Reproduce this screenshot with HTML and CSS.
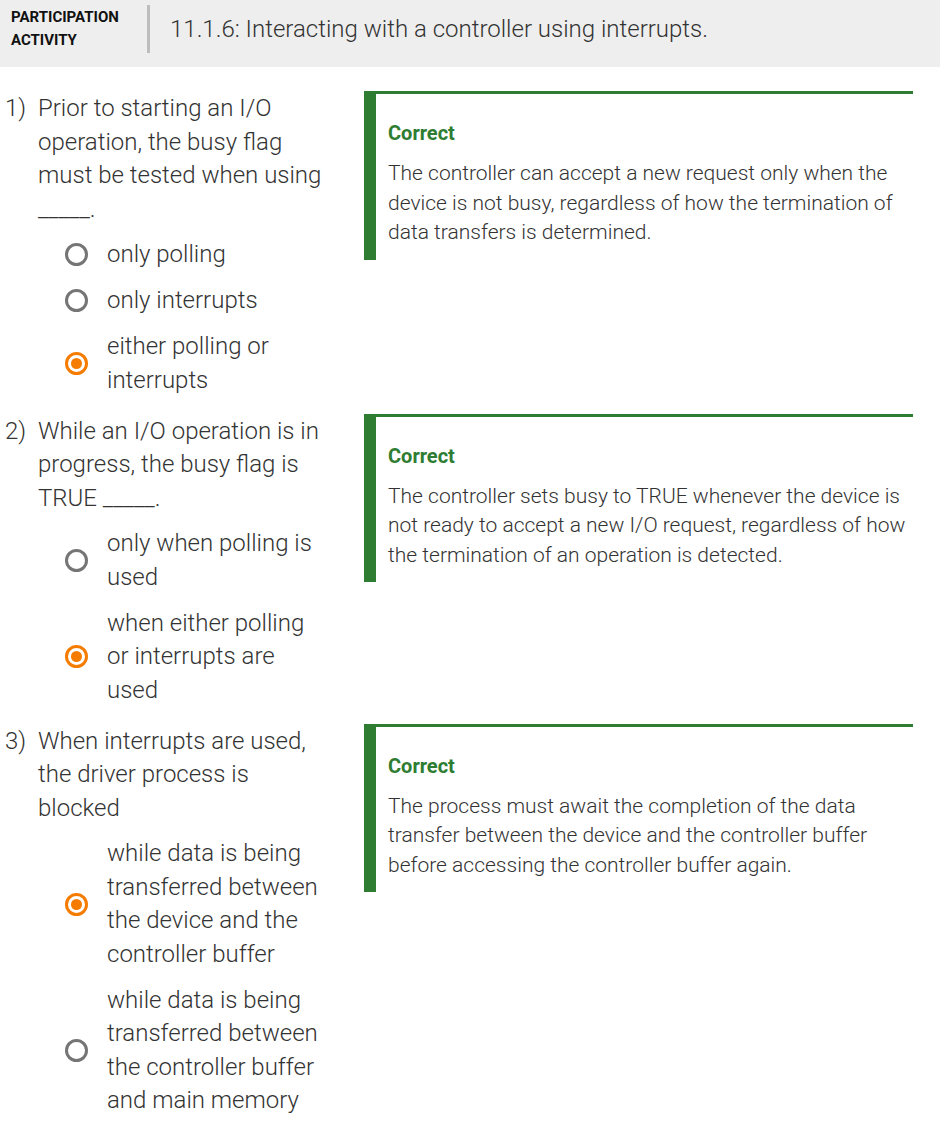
FILE: index.html
```html
<!DOCTYPE html>
<html lang="en">
<head>
<meta charset="utf-8">
<title>11.1.6: Interacting with a controller using interrupts.</title>
<link rel="stylesheet" href="styles.css">
</head>
<body>
<header class="activity-header">
  <div class="activity-label">PARTICIPATION<br>ACTIVITY</div>
  <div class="header-divider"></div>
  <h1 class="activity-title">11.1.6: Interacting with a controller using interrupts.</h1>
</header>

<main class="questions">
  <section class="question-row">
    <div class="question">
      <div class="prompt">
        <span class="q-num">1)</span>
        <span class="q-text">Prior to starting an I/O operation, the busy flag must be tested when using _____.</span>
      </div>
      <div class="choices">
        <div class="choice"><span class="radio"></span><span class="choice-text">only polling</span></div>
        <div class="choice"><span class="radio"></span><span class="choice-text">only interrupts</span></div>
        <div class="choice"><span class="radio selected"></span><span class="choice-text">either polling or interrupts</span></div>
      </div>
    </div>
    <div class="feedback">
      <div class="feedback-title">Correct</div>
      <p class="feedback-text">The controller can accept a new request only when the device is not busy, regardless of how the termination of data transfers is determined.</p>
    </div>
  </section>

  <section class="question-row">
    <div class="question">
      <div class="prompt">
        <span class="q-num">2)</span>
        <span class="q-text">While an I/O operation is in progress, the busy flag is TRUE _____.</span>
      </div>
      <div class="choices">
        <div class="choice"><span class="radio"></span><span class="choice-text">only when polling is used</span></div>
        <div class="choice"><span class="radio selected"></span><span class="choice-text">when either polling or interrupts are used</span></div>
      </div>
    </div>
    <div class="feedback">
      <div class="feedback-title">Correct</div>
      <p class="feedback-text">The controller sets busy to TRUE whenever the device is not ready to accept a new I/O request, regardless of how the termination of an operation is detected.</p>
    </div>
  </section>

  <section class="question-row">
    <div class="question">
      <div class="prompt">
        <span class="q-num">3)</span>
        <span class="q-text">When interrupts are used, the driver process is blocked</span>
      </div>
      <div class="choices">
        <div class="choice"><span class="radio selected"></span><span class="choice-text">while data is being transferred between the device and the controller buffer</span></div>
        <div class="choice"><span class="radio"></span><span class="choice-text">while data is being transferred between the controller buffer and main memory</span></div>
      </div>
    </div>
    <div class="feedback">
      <div class="feedback-title">Correct</div>
      <p class="feedback-text">The process must await the completion of the data transfer between the device and the controller buffer before accessing the controller buffer again.</p>
    </div>
  </section>
</main>
</body>
</html>
```

FILE: styles.css
```css
* {
  box-sizing: border-box;
}

html, body {
  margin: 0;
  padding: 0;
  background: #ffffff;
}

body {
  font-family: Roboto, "Liberation Sans", Arial, sans-serif;
  color: #333333;
  width: 940px;
}

.activity-header {
  display: flex;
  align-items: center;
  height: 67px;
  background: #eeeeee;
  padding: 0 0 10px 11px;
}

.activity-label {
  font-weight: 700;
  font-size: 15px;
  line-height: 23px;
  color: #111111;
  width: 136px;
}

.header-divider {
  width: 3px;
  height: 48px;
  background: #bdbdbd;
  margin-right: 20px;
}

.activity-title {
  margin: 0;
  font-weight: 300;
  font-size: 24px;
  line-height: 32px;
  color: #333333;
}

.questions {
  display: flex;
  flex-direction: column;
  gap: 17.5px;
  padding: 25px 27px 0 5px;
}

.question-row {
  display: flex;
  align-items: flex-start;
  gap: 37px;
}

.question {
  width: 322px;
  flex: none;
  font-size: 24px;
  font-weight: 300;
  line-height: 33.5px;
}

.prompt {
  display: flex;
}

.q-num {
  width: 33px;
  flex: none;
}

.q-text {
  flex: 1;
}

.choices {
  display: flex;
  flex-direction: column;
  gap: 12.5px;
  margin-top: 12px;
  padding-left: 60px;
}

.choice {
  display: flex;
  align-items: center;
}

.radio {
  flex: none;
  width: 23px;
  height: 23px;
  border: 3px solid #757575;
  border-radius: 50%;
  margin-right: 19px;
  display: flex;
  align-items: center;
  justify-content: center;
}

.radio.selected {
  border-color: #f57c00;
}

.radio.selected::after {
  content: "";
  width: 11px;
  height: 11px;
  border-radius: 50%;
  background: #f57c00;
}

.choice-text {
  flex: 1;
}

.feedback {
  flex: 1;
  margin-top: -1px;
  border-top: 3px solid #2e7d32;
  border-left: 12px solid #2e7d32;
  padding: 27px 6px 12px 12px;
}

.feedback-title {
  color: #2e7d32;
  font-weight: 700;
  font-size: 20px;
  line-height: 24px;
  margin-bottom: 14px;
}

.feedback-text {
  margin: 0;
  font-size: 21px;
  font-weight: 300;
  line-height: 29.5px;
  color: #333333;
}
```
